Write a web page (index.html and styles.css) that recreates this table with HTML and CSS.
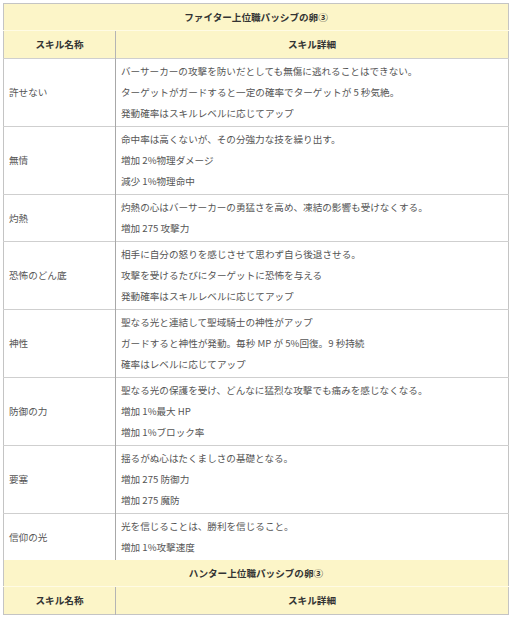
FILE: index.html
```html
<!DOCTYPE html>
<html lang="ja">
<head>
<meta charset="utf-8">
<link rel="stylesheet" href="styles.css">
</head>
<body>
<table class="skills">
  <colgroup><col class="c-name"><col class="c-desc"></colgroup>
  <tr><th colspan="2" class="title">ファイター上位職パッシブの卵③</th></tr>
  <tr><th class="head">スキル名称</th><th class="head">スキル詳細</th></tr>
  <tr><td class="name">許せない</td><td class="desc l3">バーサーカーの攻撃を防いだとしても無傷に逃れることはできない。<br>ターゲットがガードすると一定の確率でターゲットが 5 秒気絶。<br>発動確率はスキルレベルに応じてアップ</td></tr>
  <tr><td class="name">無情</td><td class="desc l3">命中率は高くないが、その分強力な技を繰り出す。<br>増加 2%物理ダメージ<br>減少 1%物理命中</td></tr>
  <tr><td class="name">灼熱</td><td class="desc">灼熱の心はバーサーカーの勇猛さを高め、凍結の影響も受けなくする。<br>増加 275 攻撃力</td></tr>
  <tr><td class="name">恐怖のどん底</td><td class="desc l3">相手に自分の怒りを感じさせて思わず自ら後退させる。<br>攻撃を受けるたびにターゲットに恐怖を与える<br>発動確率はスキルレベルに応じてアップ</td></tr>
  <tr><td class="name">神性</td><td class="desc l3">聖なる光と連結して聖域騎士の神性がアップ<br>ガードすると神性が発動。毎秒 MP が 5%回復。9 秒持続<br>確率はレベルに応じてアップ</td></tr>
  <tr><td class="name">防御の力</td><td class="desc l3">聖なる光の保護を受け、どんなに猛烈な攻撃でも痛みを感じなくなる。<br>増加 1%最大 HP<br>増加 1%ブロック率</td></tr>
  <tr><td class="name">要塞</td><td class="desc l3">揺るがぬ心はたくましさの基礎となる。<br>増加 275 防御力<br>増加 275 魔防</td></tr>
  <tr><td class="name">信仰の光</td><td class="desc">光を信じることは、勝利を信じること。<br>増加 1%攻撃速度</td></tr>
  <tr><th colspan="2" class="title">ハンター上位職パッシブの卵③</th></tr>
  <tr><th class="head">スキル名称</th><th class="head">スキル詳細</th></tr>
</table>
</body>
</html>
```

FILE: styles.css
```css
html, body {
  margin: 0;
  padding: 0;
  background: #ffffff;
}
body {
  padding: 3px;
  font-family: "Noto Sans CJK JP", "Noto Sans", sans-serif;
  font-size: 9.6px;
  color: #555555;
}
.skills {
  width: 506px;
  border-collapse: collapse;
  border: 1px solid #c4c4c4;
  table-layout: fixed;
}
.c-name { width: 112px; }
.skills th, .skills td {
  padding: 2px 5px;
  line-height: 21px;
  vertical-align: middle;
  text-align: left;
  font-weight: normal;
}
.skills td {
  border-top: 1px solid #cfcfcf;
}
.skills td.name {
  border-right: 1px solid #a8a8a8;
  padding-left: 5px;
}
.skills th {
  background: #fcf5c8;
  color: #333333;
  font-weight: bold;
  text-align: center;
}
.skills th.title {
  height: 23px;
  padding: 2px 5px 1px;
  border-bottom: 1px solid #fffbe4;
}
.skills th.head {
  height: 23px;
  padding: 2px 5px;
}
.skills th.head:first-child {
  border-right: 1px solid #b4b4b4;
}
```
